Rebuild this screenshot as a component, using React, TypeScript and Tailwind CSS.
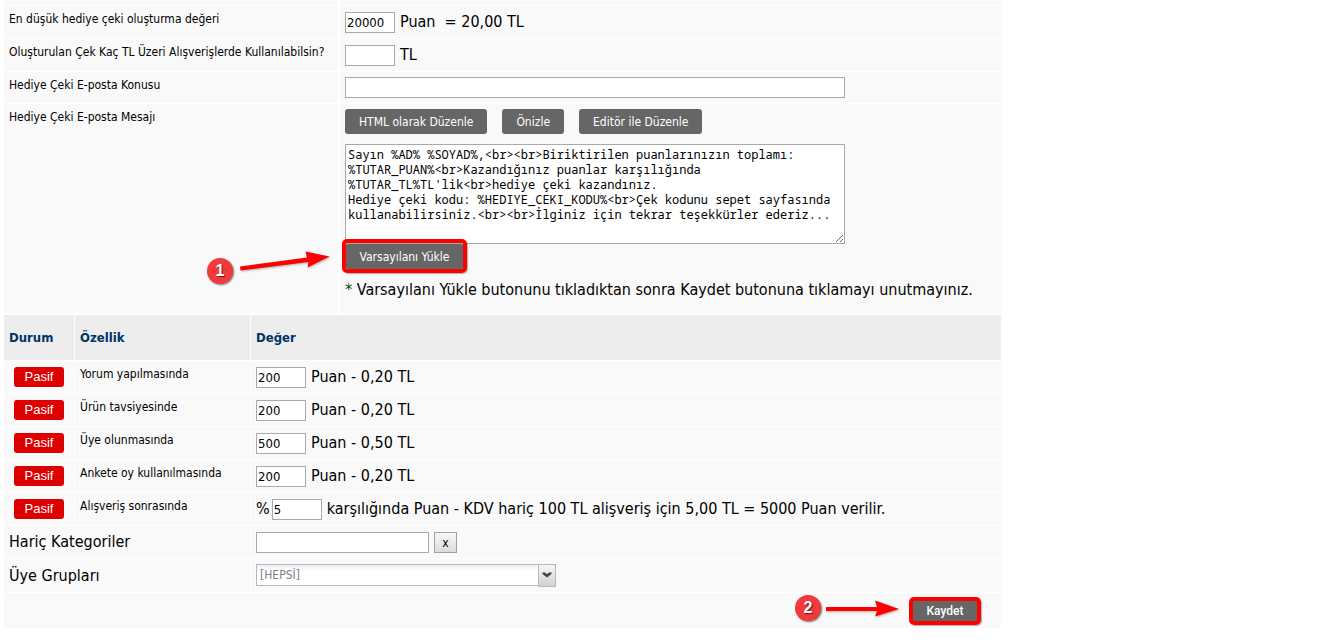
import { useState, type ReactNode } from 'react';

const INPUT =
  'h-[21px] shrink-0 rounded-none border border-[#a9a9a9] bg-white px-px text-[13px] text-black outline-none focus:border-[#666]';
const DARK_BUTTON =
  'h-[25px] cursor-pointer rounded-[3px] bg-[#666] px-[14px] text-xs text-white hover:bg-[#555]';
const CELL = 'bg-[#f9f9f9] p-0 px-[5px]';

const DEFAULT_MESSAGE = `Sayın %AD% %SOYAD%,<br><br>Biriktirilen puanlarınızın toplamı: %TUTAR_PUAN%<br>Kazandığınız puanlar karşılığında
%TUTAR_TL%TL'lik<br>hediye çeki kazandınız.
Hediye çeki kodu: %HEDIYE_CEKI_KODU%<br>Çek kodunu sepet sayfasında kullanabilirsiniz.<br><br>İlginiz için tekrar teşekkürler ederiz...`;

const FEATURES = [
  { id: 'yorum', label: 'Yorum yapılmasında', value: '200', text: 'Puan - 0,20 TL' },
  { id: 'tavsiye', label: 'Ürün tavsiyesinde', value: '200', text: 'Puan - 0,20 TL' },
  { id: 'uye', label: 'Üye olunmasında', value: '500', text: 'Puan - 0,50 TL' },
  { id: 'anket', label: 'Ankete oy kullanılmasında', value: '200', text: 'Puan - 0,20 TL' },
  {
    id: 'alisveris',
    label: 'Alışveriş sonrasında',
    value: '5',
    prefix: '%',
    text: 'karşılığında Puan - KDV hariç 100 TL alişveriş için 5,00 TL = 5000 Puan verilir.',
  },
];

function SettingRow({ id, label, children }: { id: string; label: string; children: ReactNode }) {
  return (
    <div className="flex gap-0.5">
      <div className="w-[334px] shrink-0 bg-[#f9f9f9] px-[5px] pt-[5px] text-xs leading-4">
        <label htmlFor={id}>{label}</label>
      </div>
      <div className="min-w-0 flex-1 bg-[#f9f9f9] px-[5px] py-[5px]">{children}</div>
    </div>
  );
}

function StepBadge({ n }: { n: number }) {
  return (
    <span className="flex size-[26px] items-center justify-center rounded-full bg-[#f23a3c] font-['Liberation_Sans',sans-serif] text-base font-bold text-white shadow-[1px_1px_2px_rgba(0,0,0,0.55)] [text-shadow:1px_1px_1px_rgba(0,0,0,0.6)]">
      {n}
    </span>
  );
}

export default function App() {
  const [message, setMessage] = useState(DEFAULT_MESSAGE);

  return (
    <main className="max-w-[1002px] overflow-x-clip bg-white pl-1 font-['DejaVu_Sans_Condensed','DejaVu_Sans',sans-serif] text-base text-black">
      <form className="flex flex-col gap-px" onSubmit={(e) => e.preventDefault()}>
        <section className="flex flex-col gap-px">
          <div className="flex gap-0.5">
            <div className="h-[5px] w-[334px] bg-[#f9f9f9]" />
            <div className="h-[5px] flex-1 bg-[#f9f9f9]" />
          </div>

          <SettingRow id="min" label="En düşük hediye çeki oluşturma değeri">
            <div className="flex h-[22px] items-end gap-[5px] leading-[21px]">
              <input id="min" className={`${INPUT} w-[50px]`} defaultValue="20000" />
              <span className="pb-px whitespace-pre">Puan  = 20,00 TL</span>
            </div>
          </SettingRow>

          <SettingRow id="limit" label="Oluşturulan Çek Kaç TL Üzeri Alışverişlerde Kullanılabilsin?">
            <div className="flex h-[22px] items-end gap-[5px] leading-[21px]">
              <input id="limit" className={`${INPUT} w-[50px]`} />
              <span className="pb-px">TL</span>
            </div>
          </SettingRow>

          <SettingRow id="subject" label="Hediye Çeki E-posta Konusu">
            <input id="subject" className={`${INPUT} block w-[500px] max-w-full`} />
          </SettingRow>

          <SettingRow id="message" label="Hediye Çeki E-posta Mesajı">
            <div className="flex flex-wrap gap-[15px]">
              <button type="button" className={DARK_BUTTON}>HTML olarak Düzenle</button>
              <button type="button" className={DARK_BUTTON}>Önizle</button>
              <button type="button" className={DARK_BUTTON}>Editör ile Düzenle</button>
            </div>
            <textarea
              id="message"
              spellCheck={false}
              className="mt-[10px] block h-[100px] w-[500px] max-w-full resize overflow-hidden border border-[#a9a9a9] bg-white px-0.5 pt-0.5 font-['Noto_Sans_Mono','DejaVu_Sans_Mono',monospace] text-xs leading-[15px] text-black outline-none"
              value={message}
              onChange={(e) => setMessage(e.target.value)}
            />
            <div className="relative w-fit">
              <button
                type="button"
                className={`${DARK_BUTTON} block min-w-[119px]`}
                onClick={() => setMessage(DEFAULT_MESSAGE)}
              >
                Varsayılanı Yükle
              </button>
              <span className="pointer-events-none absolute -top-[5px] -right-[3px] -bottom-[4px] -left-[3px] rounded-[5px] border-4 border-[#ff0000] shadow-[1px_1px_1px_rgba(0,0,0,0.3)]" />
              <div aria-hidden="true" className="pointer-events-none absolute top-0 right-full mr-[14px] flex items-start gap-[7px]">
                <span className="pt-[14px]">
                  <StepBadge n={1} />
                </span>
                <svg width="91" height="34" viewBox="0 0 91 34" className="drop-shadow-[1px_1px_1px_rgba(0,0,0,0.3)]">
                  <path d="M0 22.5 L67 13.5 L65.5 7.5 L89.5 12.5 L67.5 23.5 L68.5 18 L0.5 26.5 Z" fill="#ff0000" />
                </svg>
              </div>
            </div>
            <p className="pt-[11px] pb-2 leading-5">
              <span className="text-[#005000]">*</span> Varsayılanı Yükle butonunu tıkladıktan sonra Kaydet butonuna tıklamayı unutmayınız.
            </p>
          </SettingRow>
        </section>

        <table className="-mx-px w-[calc(100%+1px)] border-separate border-spacing-px text-left">
          <thead>
            <tr className="h-[45px] text-[13px] text-[#003366]">
              <th className="w-[70px] bg-[#ededed] p-0 px-[5px]">Durum</th>
              <th className="w-[175px] bg-[#ededed] p-0 px-[5px]">Özellik</th>
              <th className="bg-[#ededed] p-0 px-[5px]">Değer</th>
            </tr>
          </thead>
          <tbody>
            {FEATURES.map((f) => (
              <tr key={f.id} className="h-8">
                <td className={`${CELL} text-center`}>
                  <button
                    type="button"
                    className="mx-auto block h-5 w-[50px] cursor-pointer rounded-[3px] bg-[#dd0000] font-['Liberation_Sans',sans-serif] text-[13px] leading-5 text-white"
                  >
                    Pasif
                  </button>
                </td>
                <td className={`${CELL} pt-[5px] align-top text-xs leading-4`}>
                  <label htmlFor={f.id}>{f.label}</label>
                </td>
                <td className={CELL}>
                  <div className="flex h-[22px] items-end leading-[21px]">
                    {f.prefix && <span className="pr-0.5 pb-px">{f.prefix}</span>}
                    <input id={f.id} className={`${INPUT} mr-[5px] w-[50px]`} defaultValue={f.value} />
                    <span className="pb-px whitespace-nowrap">{f.text}</span>
                  </div>
                </td>
              </tr>
            ))}
            <tr className="h-8">
              <td colSpan={2} className={CELL}>
                <label htmlFor="haric">Hariç Kategoriler</label>
              </td>
              <td className={`${CELL} pt-px`}>
                <div className="flex items-center gap-[5px]">
                  <input id="haric" className={`${INPUT} w-[173px]`} />
                  <button
                    type="button"
                    className="h-[21px] w-[23px] cursor-pointer border border-[#a0a0a0] bg-linear-to-b from-[#f6f6f6] to-[#dddddd] text-xs leading-[18px] text-black"
                  >
                    x
                  </button>
                </div>
              </td>
            </tr>
            <tr className="h-[33px]">
              <td colSpan={2} className={CELL}>
                <label htmlFor="gruplar">Üye Grupları</label>
              </td>
              <td className={`${CELL} pb-px`}>
                <div className="relative w-[300px]">
                  <select
                    id="gruplar"
                    className="block h-[22px] w-full appearance-none border border-[#b5b8c8] bg-linear-to-b from-[#eef0f2] to-white to-25% pl-[3px] text-xs text-[#808080] outline-none"
                  >
                    <option>[HEPSİ]</option>
                  </select>
                  <span className="pointer-events-none absolute top-0 right-0 flex h-[23px] w-[18px] items-center justify-center rounded-tr-[2px] border border-[#b5b8c0] bg-linear-to-b from-[#f6f6f6] to-[#d2d2d2]">
                    <svg width="10" height="7" viewBox="0 0 10 7">
                      <path d="M0.5 0.5 H3 L5 2.2 L7 0.5 H9.5 V2 L5 5.5 L0.5 2 Z" fill="#444" />
                    </svg>
                  </span>
                </div>
              </td>
            </tr>
            <tr className="h-[35px]">
              <td colSpan={3} className="bg-[#f9f9f9] p-0 pr-6">
                <div className="flex items-center justify-end">
                  <div className="relative">
                    <button
                      type="submit"
                      className="block h-5 w-16 cursor-pointer bg-[#666] font-['Roboto',sans-serif] text-xs font-medium text-white"
                    >
                      Kaydet
                    </button>
                    <span className="pointer-events-none absolute -inset-1 rounded-[5px] border-4 border-[#ff0000] shadow-[1px_1px_1px_rgba(0,0,0,0.3)]" />
                    <div aria-hidden="true" className="pointer-events-none absolute -top-[6px] right-full mr-[12px] flex items-center gap-[5px]">
                      <StepBadge n={2} />
                      <svg width="75" height="20" viewBox="0 0 75 20" className="drop-shadow-[1px_1px_1px_rgba(0,0,0,0.3)]">
                        <path d="M0 9 H51 L49 2.5 L73 11 L49 18.5 L51 13 H0 Z" fill="#ff0000" />
                      </svg>
                    </div>
                  </div>
                </div>
              </td>
            </tr>
          </tbody>
        </table>
      </form>
    </main>
  );
}
